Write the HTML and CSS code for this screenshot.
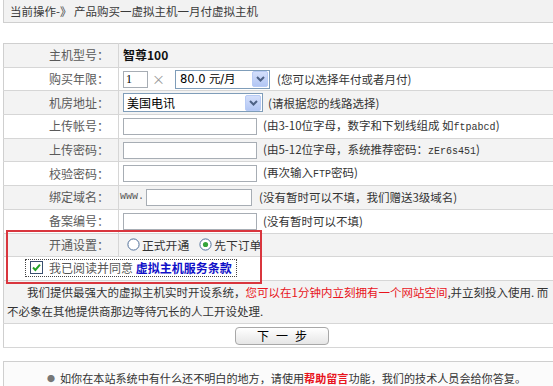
FILE: index.html
```html
<!DOCTYPE html>
<html lang="zh-CN">
<head>
<meta charset="utf-8">
<title>产品购买</title>
<link rel="stylesheet" href="styles.css">
</head>
<body>
<div class="crumb">当前操作-》 产品购买一虚拟主机一月付虚拟主机</div>

<div class="form-wrap">
  <table class="form">
    <colgroup><col class="c-label"><col></colgroup>
    <tr class="row alt"><th>主机型号：</th><td><div class="field"><b class="model">智尊100</b></div></td></tr>
    <tr class="row"><th>购买年限：</th><td><div class="field">
      <input class="txt w-num" type="text" value="1">
      <span class="times">×</span>
      <span class="select w-price"><span class="select-val price">80.0 元/月</span><span class="select-btn"><svg width="9" height="6" viewBox="0 0 9 6"><path d="M1 1 L4.5 4.5 L8 1" fill="none" stroke="#4d6185" stroke-width="2"/></svg></span></span>
      <span class="hint h-price">(您可以选择年付或者月付)</span>
    </div></td></tr>
    <tr class="row alt"><th>机房地址：</th><td><div class="field">
      <span class="select w-room"><span class="select-val">美国电讯</span><span class="select-btn"><svg width="9" height="6" viewBox="0 0 9 6"><path d="M1 1 L4.5 4.5 L8 1" fill="none" stroke="#4d6185" stroke-width="2"/></svg></span></span>
      <span class="hint h-room">(请根据您的线路选择)</span>
    </div></td></tr>
    <tr class="row"><th>上传帐号：</th><td><div class="field">
      <input class="txt w-long" type="text">
      <span class="hint">(由3-10位字母，数字和下划线组成 如<span class="mono">ftpabcd</span>)</span>
    </div></td></tr>
    <tr class="row alt"><th>上传密码：</th><td><div class="field">
      <input class="txt w-long" type="text">
      <span class="hint">(由5-12位字母，系统推荐密码：<span class="mono">zEr6s451</span>)</span>
    </div></td></tr>
    <tr class="row"><th>校验密码：</th><td><div class="field">
      <input class="txt w-long" type="text">
      <span class="hint">(再次输入<span class="mono">FTP</span>密码)</span>
    </div></td></tr>
    <tr class="row alt"><th>绑定域名：</th><td><div class="field">
      <span class="www mono">www.</span>
      <input class="txt w-domain" type="text">
      <span class="hint h-domain">(没有暂时可以不填，我们赠送3级域名)</span>
    </div></td></tr>
    <tr class="row"><th>备案编号：</th><td><div class="field">
      <input class="txt w-long" type="text">
      <span class="hint">(没有暂时可以不填)</span>
    </div></td></tr>
    <tr class="row alt"><th>开通设置：</th><td><div class="field radios">
      <span class="radio"><svg width="13" height="13" viewBox="0 0 13 13"><circle cx="6.5" cy="6.5" r="5.6" fill="#fff" stroke="#51709a"/></svg>正式开通</span>
      <span class="radio"><svg width="13" height="13" viewBox="0 0 13 13"><circle cx="6.5" cy="6.5" r="5.6" fill="#fff" stroke="#51709a"/><circle cx="6.5" cy="6.5" r="2.6" fill="#35a43a"/></svg>先下订单</span>
    </div></td></tr>
    <tr class="row"><td colspan="2" class="agree-cell">
      <span class="agree"><svg class="check" width="13" height="13" viewBox="0 0 13 13"><rect x="0.5" y="0.5" width="12" height="12" fill="#fff" stroke="#3a4f6e"/><path d="M3 6.5 L5.4 9 L10 3.6" fill="none" stroke="#22a124" stroke-width="2"/></svg>我已阅读并同意 <a class="terms" href="#">虚拟主机服务条款</a></span>
    </td></tr>
    <tr class="alt"><td colspan="2" class="intro">我们提供最强大的虚拟主机实时开设系统，<span class="red">您可以在1分钟内立刻拥有一个网站空间</span>,并立刻投入使用. 而<br>不必象在其他提供商那边等待冗长的人工开设处理.</td></tr>
    <tr class="row"><td colspan="2" class="btn-cell"><button class="btn" type="button">下一步</button></td></tr>
  </table>
  <div class="highlight"></div>
</div>

<div class="help"><span class="dot">●</span>如你在本站系统中有什么还不明白的地方，请使用<b class="red">帮助留言</b>功能，我们的技术人员会给你答复。</div>
</body>
</html>
```

FILE: styles.css
```css
html, body {
  margin: 0;
  padding: 0;
  overflow: hidden;
  background: #fff;
}
body {
  width: 553px;
  height: 386px;
  font-family: "Noto Sans CJK SC", "Noto Sans", sans-serif;
  font-size: 11.5px;
  color: #333;
}

.crumb {
  margin-left: 3px;
  width: 558px;
  height: 22px;
  box-sizing: content-box;
  border: 1px solid #cfcfcf;
  border-top: none;
  background: #f2f2f2;
  line-height: 22px;
  padding-left: 6px;
  color: #3a3a3a;
}

.form-wrap {
  position: relative;
  margin: 20px 0 0 3px;
  width: 558px;
}

.form {
  width: 558px;
  border-collapse: collapse;
  table-layout: fixed;
  border: 1px solid #cfcfcf;
}
.c-label { width: 115px; }

.form th,
.form td {
  padding: 0;
  border-bottom: 1px solid #d6d6d6;
  vertical-align: middle;
  line-height: 16px;
}
.form th {
  font-weight: normal;
  text-align: right;
  color: #5a5a5a;
  font-size: 12px;
  padding-right: 9px;
  border-right: 1px solid #d6d6d6;
}
.form td { padding-left: 4px; }
.row { height: 23.7px; }
.alt { background: #f3f3f3; }

.field {
  display: flex;
  align-items: center;
}

.model {
  font-size: 12px;
  color: #111;
}

.txt {
  height: 17px;
  box-sizing: border-box;
  margin: 0;
  padding: 0 2px;
  border: 1px solid #a7adb4;
  background: #fff;
  font: 12px "Liberation Serif", serif;
  color: #000;
}
.w-num { width: 25px; }
.w-long { width: 134px; }
.w-domain { width: 106px; }

.times {
  color: #999;
  font-size: 13px;
  margin: 0 10px 0 4px;
}

.select {
  display: inline-flex;
  align-items: center;
  height: 19px;
  box-sizing: border-box;
  border: 1px solid #7f9db9;
  background: #fff;
  color: #000;
}
.w-price { width: 95px; }
.w-room { width: 140px; }
.select-val {
  flex: 1;
  padding-left: 3px;
  font-size: 12px;
  white-space: nowrap;
}
.price {
  font-family: "DejaVu Sans", sans-serif;
  font-size: 11.5px;
  padding-left: 4px;
}
.select-btn {
  width: 14px;
  height: 14px;
  margin-right: 1px;
  display: flex;
  align-items: center;
  justify-content: center;
  border: 1px solid #b8cbf5;
  border-radius: 2px;
  background: linear-gradient(#d4dffb, #b2c6f4);
}

.hint {
  margin-left: 6px;
  white-space: nowrap;
  color: #333;
}
.h-price { margin-left: 7px; }
.h-room { margin-left: 5px; }
.h-domain { margin-left: 7px; }

.mono {
  font-family: "Liberation Mono", monospace;
  font-size: 10px;
}
.www {
  color: #555;
  margin: 0 2px 0 -3px;
}

.radios { padding-left: 4px; }
.radio {
  display: inline-flex;
  align-items: center;
  gap: 2px;
  margin-right: 10px;
  font-size: 11.8px;
  color: #333;
}

.agree-cell { padding-left: 22px !important; }
.agree {
  display: inline-flex;
  align-items: center;
  height: 16px;
  padding: 0 4px;
  outline: 1px dotted #444;
  color: #555;
  font-size: 12px;
  white-space: pre;
}
.check { margin-right: 6px; }
.terms {
  color: #1010c8;
  font-weight: bold;
  text-decoration: none;
}

.intro {
  padding: 2px 0 2px 3px !important;
  line-height: 19px !important;
  text-indent: 20px;
  white-space: nowrap;
  color: #333;
}
.red { color: #e8141c; }

.btn-cell { text-align: center; padding-left: 0 !important; }
.btn {
  width: 94px;
  height: 18px;
  padding: 0 0 0 7px;
  border: 1px solid #a8a8a8;
  border-radius: 4px;
  background: linear-gradient(#ffffff, #e6e6e6);
  font-family: "Noto Sans CJK SC", sans-serif;
  font-size: 12px;
  letter-spacing: 7px;
  line-height: 16px;
  color: #000;
  vertical-align: middle;
}

.highlight {
  position: absolute;
  left: 3px;
  top: 187px;
  width: 256px;
  height: 54px;
  box-sizing: border-box;
  border: 2px solid #d9363e;
  pointer-events: none;
}

.help {
  margin: 13px 0 0 3px;
  width: 558px;
  border: 1px solid #cfcfcf;
  background: #fbfbfb;
  padding: 8px 0 8px 43px;
  line-height: 16px;
  font-size: 11.1px;
  color: #333;
  white-space: nowrap;
}
.dot {
  color: #777;
  font-size: 8px;
  margin-right: 5px;
  vertical-align: 1px;
}
.help .red { font-weight: bold; }
```
